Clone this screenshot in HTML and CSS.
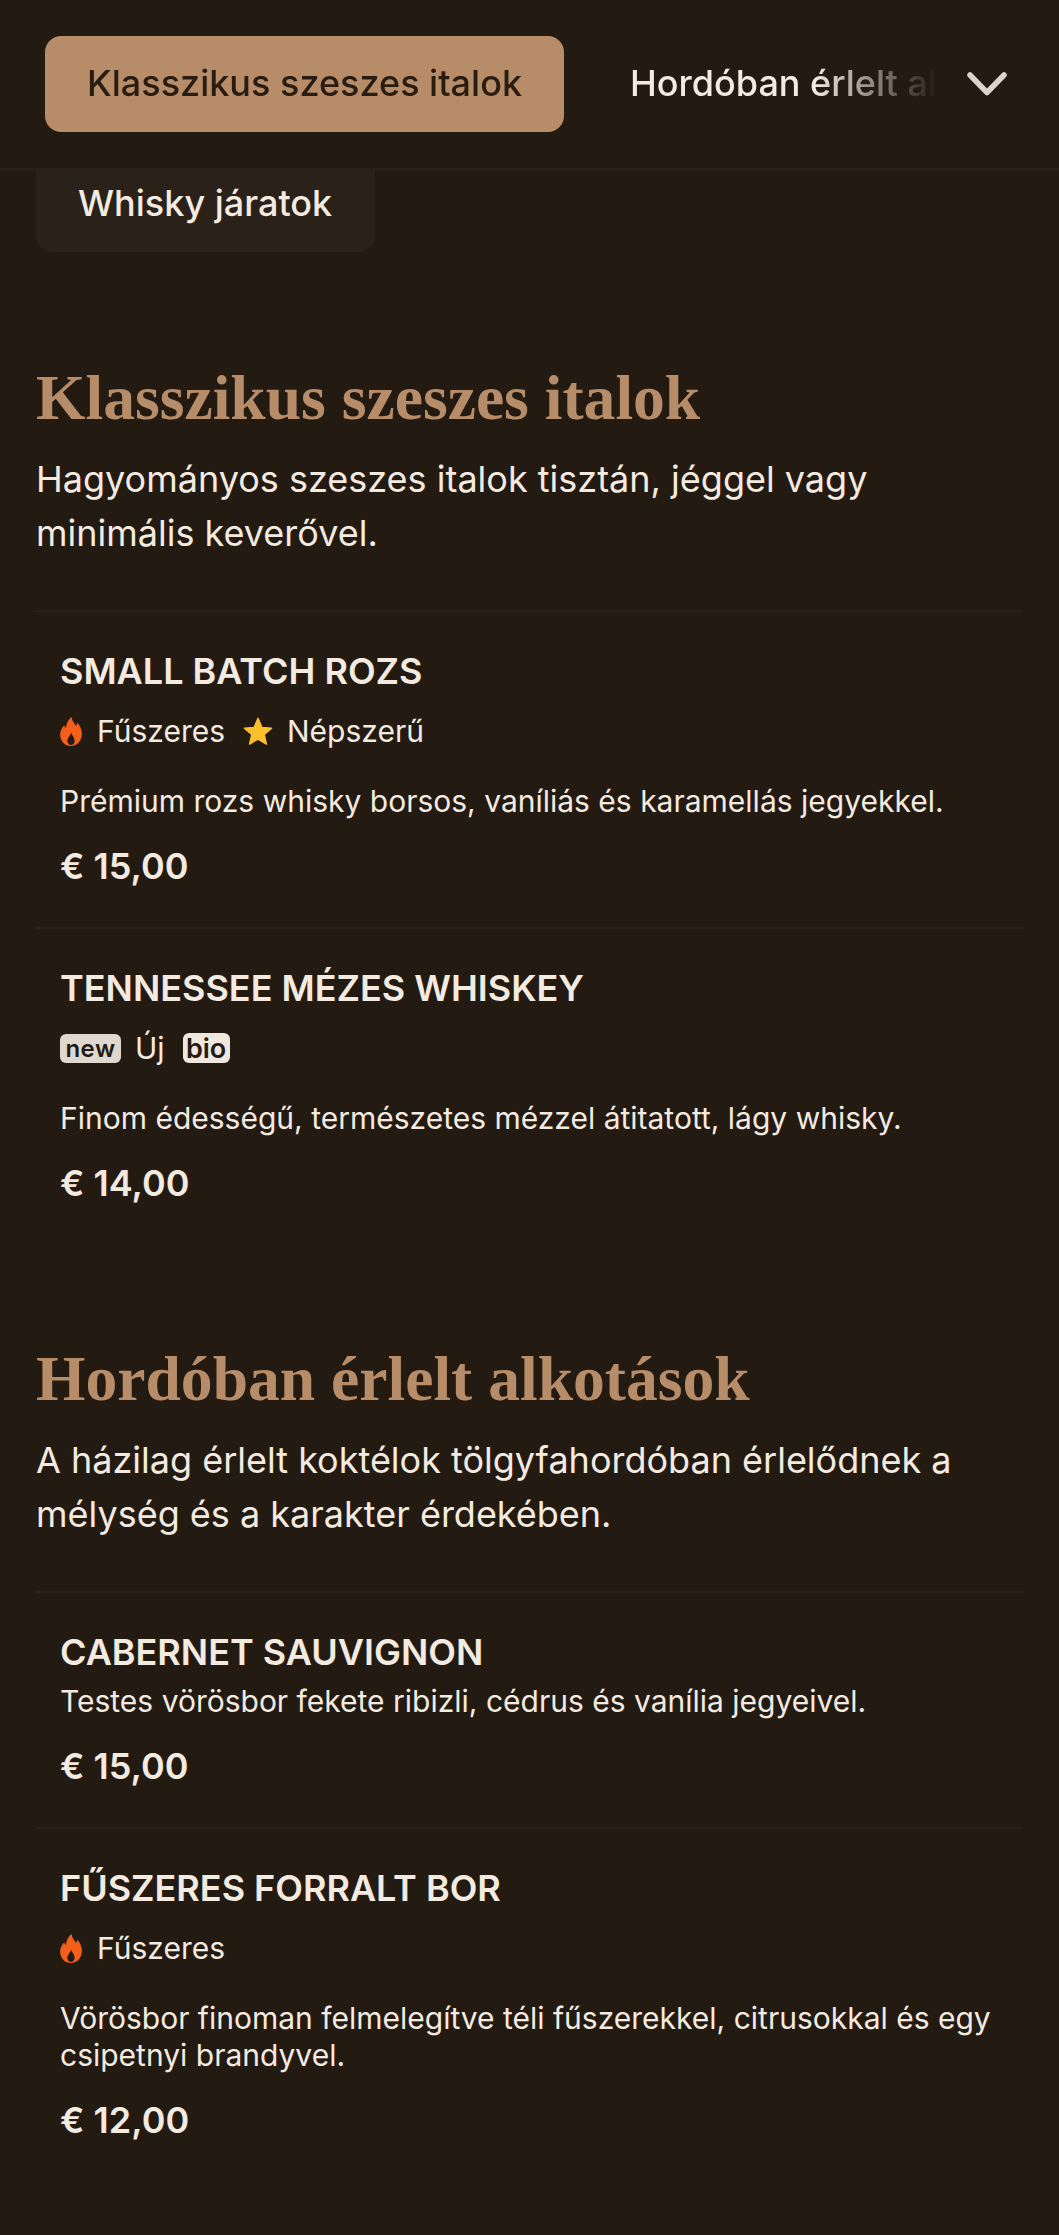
FILE: index.html
```html
<!DOCTYPE html>
<html lang="hu">
<head>
<meta charset="utf-8">
<title>Itallap</title>
<link rel="stylesheet" href="styles.css">
</head>
<body>
<header class="topbar">
  <nav class="tabs">
    <a class="tab tab-active">Klasszikus szeszes italok</a>
    <a class="tab tab-next">Hordóban érlelt alkotások</a>
  </nav>
  <button class="chevron" aria-label="Több">
    <svg viewBox="0 0 42 26" width="42" height="26"><path d="M4 4 21 21.500 38 4" fill="none" stroke="#dcd4ca" stroke-width="5.500" stroke-linecap="round" stroke-linejoin="round"/></svg>
  </button>
</header>
<div class="overflow-tab">Whisky járatok</div>
<main class="menu">
  <section class="section">
    <h2 class="section-title">Klasszikus szeszes italok</h2>
    <p class="section-desc">Hagyományos szeszes italok tisztán, jéggel vagy minimális keverővel.</p>
    <article class="item">
      <h3 class="item-name">SMALL BATCH ROZS</h3>
      <div class="tags">
        <svg class="icon-flame" viewBox="0 0 24 32"><path fill="#f4601c" fill-rule="evenodd" d="M12.500 0c.8 4.600 3 7 5.300 9.800.6-1 .9-2.200.9-3.600 3 3.100 5.300 7.600 5.300 12.400C24 26.400 18.800 32 12 32S0 26.400 0 19.200C0 14.800 2.500 11.700 4.600 9.100 5 10.500 5.500 11.600 6.500 12.500 6.500 7.800 9 3 12.500 0ZM12.300 17c-.6 3.100-4.300 5.600-4.300 9.400 0 2.500 1.800 4.400 4 4.400s4-1.900 4-4.400c0-3.800-3.100-6.100-3.700-9.400Z"/></svg>
        <span class="tag-text">Fűszeres</span>
        <svg class="icon-star" viewBox="0 0 32 30"><path fill="#fbc02d" stroke="#fbc02d" stroke-width="1.500" stroke-linejoin="round" d="M16 1.500 20.200 11.200 30.500 12 22.700 18.800 25 29 16 23.600 7 29 9.300 18.800 1.500 12 11.800 11.200Z"/></svg>
        <span class="tag-text">Népszerű</span>
      </div>
      <p class="item-desc">Prémium rozs whisky borsos, vaníliás és karamellás jegyekkel.</p>
      <div class="price">€ 15,00</div>
    </article>
    <article class="item">
      <h3 class="item-name">TENNESSEE MÉZES WHISKEY</h3>
      <div class="tags">
        <span class="badge badge-new">new</span>
        <span class="tag-text">Új</span>
        <span class="badge badge-bio">bio</span>
      </div>
      <p class="item-desc">Finom édességű, természetes mézzel átitatott, lágy whisky.</p>
      <div class="price">€ 14,00</div>
    </article>
  </section>
  <section class="section">
    <h2 class="section-title">Hordóban érlelt alkotások</h2>
    <p class="section-desc">A házilag érlelt koktélok tölgyfahordóban érlelődnek a mélység és a karakter érdekében.</p>
    <article class="item">
      <h3 class="item-name item-name-tight">CABERNET SAUVIGNON</h3>
      <p class="item-desc">Testes vörösbor fekete ribizli, cédrus és vanília jegyeivel.</p>
      <div class="price">€ 15,00</div>
    </article>
    <article class="item">
      <h3 class="item-name">FŰSZERES FORRALT BOR</h3>
      <div class="tags">
        <svg class="icon-flame" viewBox="0 0 24 32"><path fill="#f4601c" fill-rule="evenodd" d="M12.500 0c.8 4.600 3 7 5.300 9.800.6-1 .9-2.200.9-3.600 3 3.100 5.300 7.600 5.300 12.400C24 26.400 18.800 32 12 32S0 26.400 0 19.200C0 14.800 2.500 11.700 4.600 9.100 5 10.500 5.500 11.600 6.500 12.500 6.500 7.800 9 3 12.500 0ZM12.300 17c-.6 3.100-4.300 5.600-4.300 9.400 0 2.500 1.800 4.400 4 4.400s4-1.900 4-4.400c0-3.800-3.100-6.100-3.700-9.400Z"/></svg>
        <span class="tag-text">Fűszeres</span>
      </div>
      <p class="item-desc">Vörösbor finoman felmelegítve téli fűszerekkel, citrusokkal és egy csipetnyi brandyvel.</p>
      <div class="price">€ 12,00</div>
    </article>
  </section>
</main>
</body>
</html>
```
FILE: styles.css
```css
* { box-sizing: border-box; }
html, body { margin: 0; padding: 0; }
body {
  background: #231a12;
  color: #f3eae0;
  font-family: Inter, "Noto Sans", sans-serif;
  height: 2235px;
  overflow: hidden;
}
.topbar {
  display: flex;
  align-items: center;
  height: 170px;
  padding: 0 51px 1px 45px;
  border-bottom: 2px solid #2a2118;
}
.tabs {
  display: flex;
  gap: 66px;
  flex: 1;
  min-width: 0;
  overflow: hidden;
  align-items: center;
  white-space: nowrap;
  -webkit-mask-image: linear-gradient(to right, #000 0, #000 770px, transparent 893px);
  mask-image: linear-gradient(to right, #000 0, #000 770px, transparent 893px);
}
.tab {
  font-size: 36px;
  font-weight: 500;
  line-height: 46px;
  flex: none;
}
.tab-next { padding-bottom: 2px; }
.tab-active {
  background: #b68d68;
  color: #2a1c10;
  border-radius: 16px;
  padding: 24px 42px;
  height: 96px;
}
.chevron {
  background: none;
  border: 0;
  padding: 0;
  margin-left: 22px;
  width: 42px;
  height: 26px;
  display: block;
}
.chevron svg { display: block; }
.overflow-tab {
  margin-left: 36px;
  width: 339px;
  height: 83px;
  padding: 11px 42px 0;
  margin-top: -1px;
  background: #2a2118;
  border-radius: 0 0 16px 16px;
  font-size: 36px;
  font-weight: 500;
  line-height: 46px;
}
.menu { padding: 0 36px; }
.section { padding-top: 110px; }
.section + .section { padding-top: 99px; }
.section-title {
  margin: 0;
  font-family: "Liberation Serif", serif;
  font-size: 63.6px;
  font-weight: 700;
  line-height: 72px;
  color: #b68d68;
}
.section-desc {
  margin: 18px 0 0;
  font-size: 36px;
  line-height: 54px;
  max-width: 960px;
}
.item {
  border-top: 2px solid #2a2118;
  padding: 36px 24px 38px;
}
.section-desc + .item { margin-top: 50px; }
.item-name {
  margin: 0;
  font-size: 36px;
  line-height: 46px;
  font-weight: 600;
  letter-spacing: 0;
}
.tags {
  display: flex;
  align-items: center;
  gap: 14px;
  height: 46px;
  margin-top: 14px;
}
.tag-text { font-size: 30px; line-height: 40px; }
.tag-text + svg { margin-left: 4px; }
.icon-flame { width: 22px; height: 29px; flex: none; margin-right: 1px; }
.icon-star { width: 30px; height: 30px; flex: none; }
.badge {
  font-weight: 600;
  border-radius: 6px;
  color: #231a12;
  display: flex;
  align-items: center;
  justify-content: center;
}
.badge-new { background: #e0d8ce; width: 61px; height: 29px; font-size: 24px; margin-top: 1px; letter-spacing: 0.5px; }
.badge-bio { background: #f0e8df; width: 47px; height: 30px; font-size: 27px; margin-left: 4px; }
.item-desc {
  margin: 29px 0 0;
  font-size: 30px;
  line-height: 37px;
}
.item-name-tight + .item-desc { margin-top: 8px; }
.price {
  margin-top: 23px;
  font-size: 36px;
  font-weight: 600;
  line-height: 46px;
}
```
